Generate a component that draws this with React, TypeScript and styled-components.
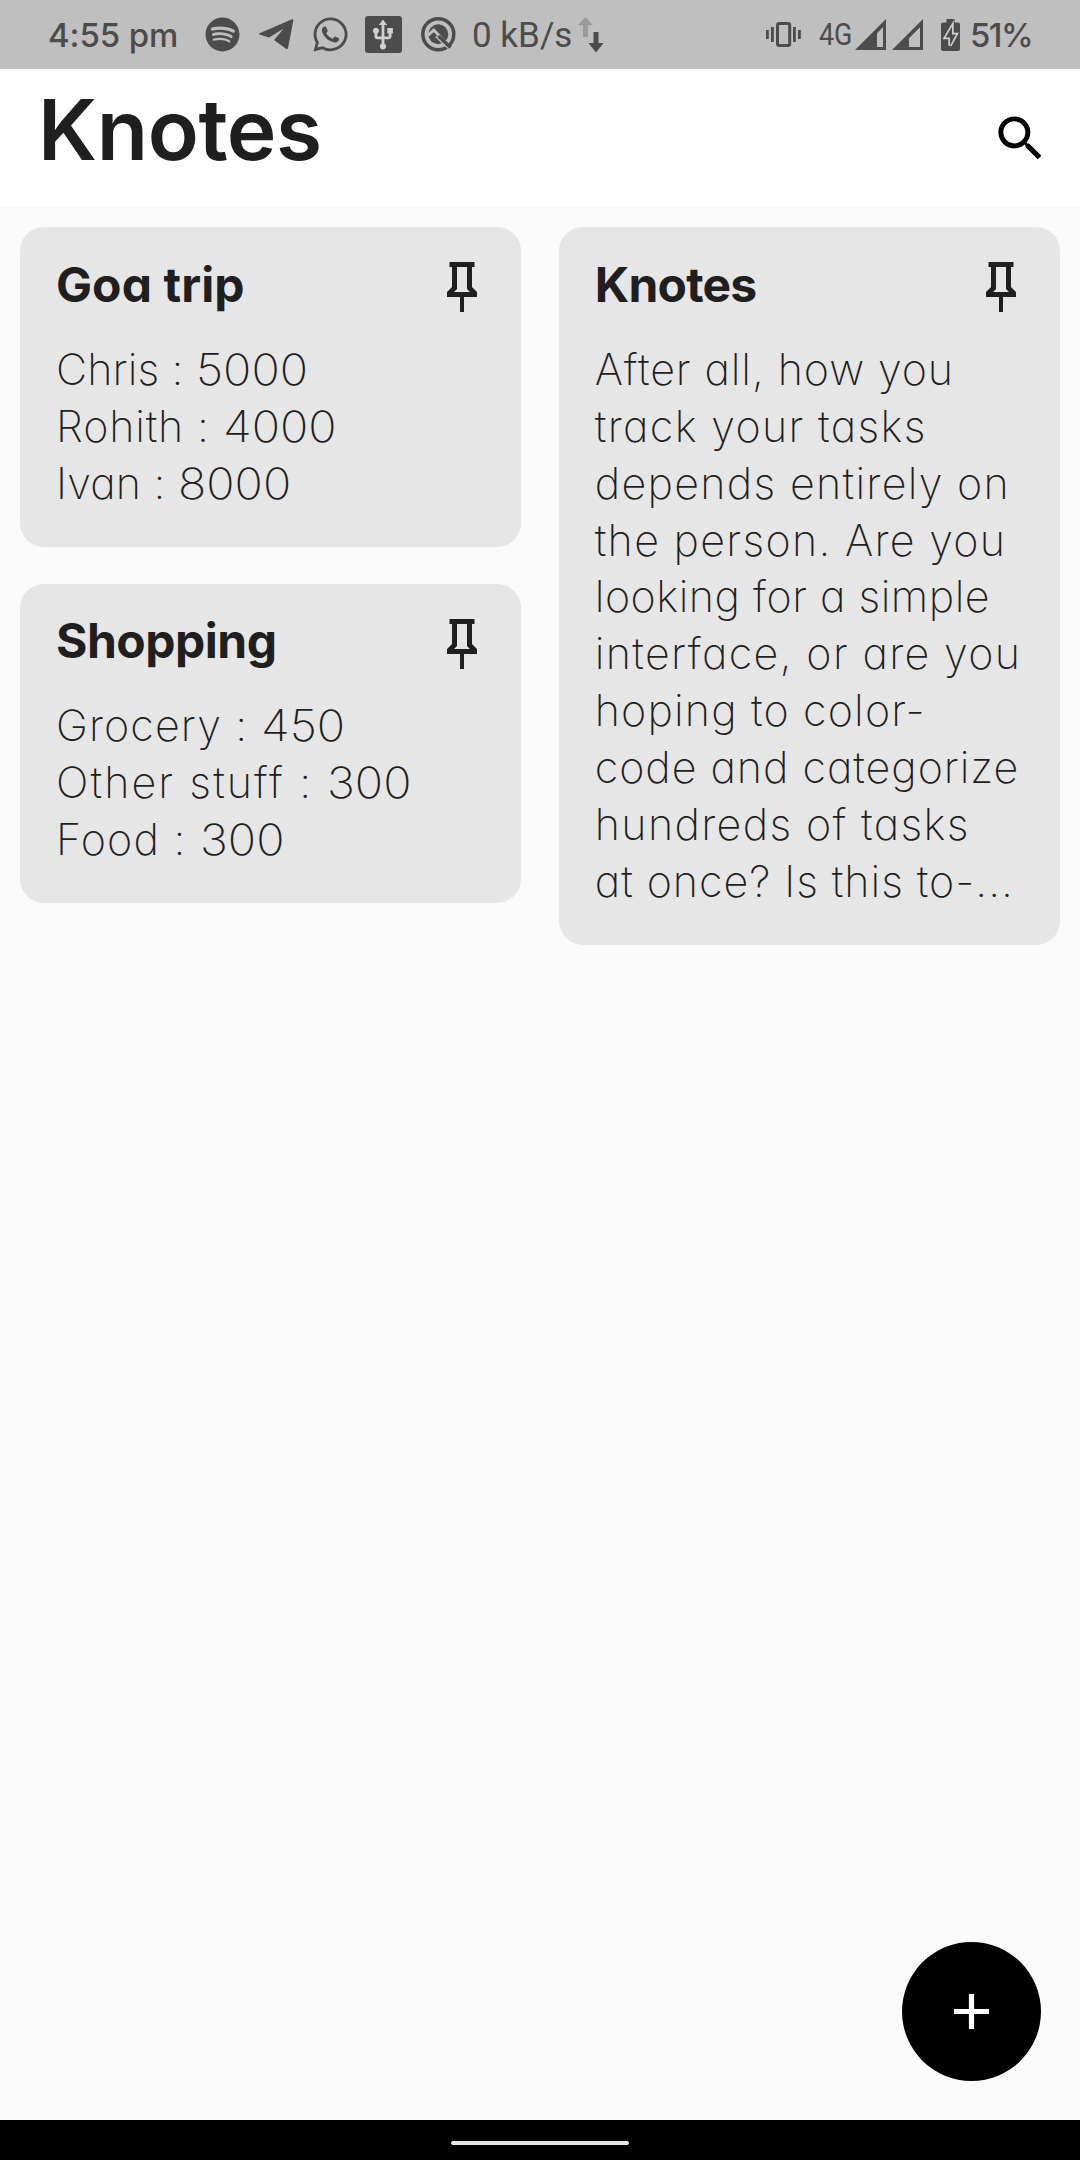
import React from 'react';
import styled, { createGlobalStyle } from 'styled-components';
import { FaSpotify, FaWhatsapp } from 'react-icons/fa';
import { MdSearch, MdUsb } from 'react-icons/md';

const ink = '#4c4c4c';
const barGrey = '#bfbfbf';

const GlobalStyle = createGlobalStyle`
  *, *::before, *::after { box-sizing: border-box; }
  body { margin: 0; background: #fafafa; }
  h1, h2, p { margin: 0; }
  svg { display: block; flex: none; }
`;

const Screen = styled.div`
  display: flex;
  flex-direction: column;
  width: 1080px;
  height: 2160px;
  overflow: hidden;
  background: #fafafa;
  color: #1f1f1f;
  font-family: Inter, 'Liberation Sans', sans-serif;
  font-feature-settings: 'cv11', 'calt' 0;
`;

const StatusBar = styled.div`
  display: flex;
  flex: none;
  justify-content: space-between;
  height: 69px;
  padding: 0 48px;
  background: ${barGrey};
  color: ${ink};
`;

const StatusGroup = styled.div`
  display: flex;
  align-items: center;
`;

const Slot = styled.span<{ $gap: number }>`
  display: flex;
  flex: none;
  margin-left: ${(p) => p.$gap}px;
`;

const StatusText = styled.span<{ $gap?: number; $width: number; $spacing?: number }>`
  width: ${(p) => p.$width}px;
  margin-left: ${(p) => p.$gap ?? 0}px;
  font-size: 33px;
  font-weight: 500;
  line-height: 40px;
  letter-spacing: ${(p) => p.$spacing ?? 0}px;
  white-space: nowrap;
`;

const SpeedText = styled(StatusText)`
  padding-top: 2px;
  font-family: Roboto, sans-serif;
  font-size: 35px;
  font-weight: 400;
`;

const NetworkText = styled(StatusText)`
  font-family: Roboto, sans-serif;
  font-size: 30.5px;
  font-weight: 400;
  transform: scaleX(0.88);
  transform-origin: left;
`;

const UsbBadge = styled(Slot)`
  align-items: center;
  justify-content: center;
  width: 37px;
  height: 37px;
  border-radius: 3px;
  background: ${ink};
  color: #d0d0d0;
`;

const Header = styled.header`
  display: flex;
  flex: none;
  align-items: flex-start;
  justify-content: space-between;
  height: 138px;
  padding: 11px 30px 0 38px;
  background: #fff;
`;

const AppTitle = styled.h1`
  font-size: 84px;
  font-weight: 600;
  line-height: 100px;
  letter-spacing: -0.4px;
`;

const SearchButton = styled.button`
  margin: 29px 0 0;
  padding: 0;
  border: 0;
  background: none;
  color: #000;
`;

const Board = styled.main`
  display: grid;
  grid-template-columns: 1fr 1fr;
  flex: 1;
  align-items: start;
  gap: 37.5px;
  padding: 20.3px 20px 0;
`;

const Column = styled.div`
  display: flex;
  flex-direction: column;
  gap: 37px;
`;

const Card = styled.article`
  padding: 28.7px 29px 35.2px 36px;
  border-radius: 24px;
  background: #e6e6e6;
`;

const CardHead = styled.div`
  display: flex;
  justify-content: space-between;
  height: 85px;
`;

const CardTitle = styled.h2<{ $spacing: number }>`
  font-size: 48px;
  font-weight: 700;
  line-height: 58px;
  letter-spacing: ${(p) => p.$spacing}px;
`;

const Line = styled.p<{ $spacing: number }>`
  font-size: 43px;
  font-weight: 200;
  line-height: 56.88px;
  letter-spacing: ${(p) => p.$spacing}px;
  white-space: nowrap;
`;

const Amount = styled.span`
  display: inline-block;
  letter-spacing: 0;
  transform: scaleX(1.09);
  transform-origin: left;
`;

const Footer = styled.div`
  display: flex;
  flex: none;
  justify-content: flex-end;
  padding: 0 39.5px 39.5px;
`;

const Fab = styled.button`
  display: flex;
  align-items: center;
  justify-content: center;
  width: 139px;
  height: 139px;
  padding: 0;
  border: 0;
  border-radius: 50%;
  background: #000;
`;

const NavBar = styled.div`
  display: flex;
  flex: none;
  justify-content: center;
  height: 40px;
  padding-top: 21px;
  background: #000;
`;

const Handle = styled.span`
  width: 178px;
  height: 4px;
  border-radius: 2px;
  background: #e6e6e6;
`;

const Pin = styled.svg`
  margin-top: 1.5px;
  fill: currentColor;
`;

const PinIcon = () => (
  <Pin width="60" height="60" viewBox="0 0 24 24">
    <path d="M16 12V4h1V2H7v2h1v8l-2 2v2h5.200v6h1.600v-6H18v-2l-2-2M8.800 14l1.200-1.200V4h4v8.800l1.200 1.200H8.800z" />
  </Pin>
);

const PlaneIcon = () => (
  <svg width="35" height="31" viewBox="0 0 35 31">
    <path
      d="M.5 14.200 33 .2q1.600-.4 1.300 1.500L29 29q-.6 1.600-2 .7L15 21l9.500-11.200L10 18.500 1 15.800q-1.500-.7-.5-1.600z"
      fill={ink}
    />
  </svg>
);

const QIcon = () => (
  <svg width="35" height="35" viewBox="0 0 35 35" fill="none">
    <circle cx="17.300" cy="17.300" r="15.500" stroke={ink} strokeWidth="3.500" />
    <circle cx="17.300" cy="17.300" r="10" fill={ink} />
    <path d="M7 18.500 12.800 13 28 29" stroke={barGrey} strokeWidth="3" />
    <path d="M15 19.500 30.500 34" stroke={barGrey} strokeWidth="2" />
    <path d="M17.500 19 29.500 30.500" stroke={ink} strokeWidth="3.500" />
  </svg>
);

const TransferIcon = () => (
  <svg width="26" height="36" viewBox="0 0 26 36">
    <path d="M7.500 0 15 8h-5v12H5V8H0z" fill="#999" />
    <path d="M15.500 15h5v11H25.500L18 35.500 10.500 26h5z" fill={ink} />
  </svg>
);

const VibrateIcon = () => (
  <svg width="35" height="25" viewBox="0 0 35 25" fill={ink}>
    <path d="M0 8h2.800v9H0zM5 5h2.800v15H5zM27 5h2.800v15H27zM32 8h2.800v9H32z" />
    <rect x="11.500" y="1.500" width="12.200" height="22" rx="1.500" fill="none" stroke={ink} strokeWidth="3" />
  </svg>
);

const SignalIcon = ({ cut }: { cut: number }) => (
  <svg width="31" height="31" viewBox="0 0 31 31">
    <path fillRule="evenodd" fill={ink} d={`M0 31 31 0v31zM${cut} ${36.3 - cut}V28H28V8.300z`} />
  </svg>
);

const bolt = 'M11 7.500 4.500 18.500h4.500v8L15 15.500h-4z';

const BatteryIcon = () => (
  <svg width="19" height="32" viewBox="0 0 19 32">
    <path d="M5.500 0h8v3.500H17a2 2 0 0 1 2 2V30a2 2 0 0 1-2 2H2a2 2 0 0 1-2-2V5.500a2 2 0 0 1 2-2h3.500z" fill={ink} />
    <path d={bolt} fill={ink} stroke="#cfcfcf" strokeWidth="3.400" />
    <path d={bolt} fill={ink} />
  </svg>
);

const PlusIcon = () => (
  <svg width="35" height="35" viewBox="0 0 35 35">
    <path d="M14.900 0h5.200v14.900H35v5.200H20.100V35h-5.200V20.100H0v-5.200h14.900z" fill="#fff" />
  </svg>
);

type NoteLine = { text: string; spacing: number; amount?: string };
type Note = { title: string; titleSpacing: number; lines: NoteLine[] };

const leftNotes: Note[] = [
  {
    title: 'Goa trip',
    titleSpacing: 0.1,
    lines: [
      { text: 'Chris :', amount: '5000', spacing: 0.1 },
      { text: 'Rohith :', amount: '4000', spacing: 0.8 },
      { text: 'Ivan :', amount: '8000', spacing: 0.2 },
    ],
  },
  {
    title: 'Shopping',
    titleSpacing: -0.5,
    lines: [
      { text: 'Grocery :', amount: '450', spacing: 1.1 },
      { text: 'Other stuff :', amount: '300', spacing: 2.1 },
      { text: 'Food :', amount: '300', spacing: 1.2 },
    ],
  },
];

const rightNotes: Note[] = [
  {
    title: 'Knotes',
    titleSpacing: -0.8,
    lines: [
      { text: 'After all, how you', spacing: 0.9 },
      { text: 'track your tasks', spacing: 1.35 },
      { text: 'depends entirely on', spacing: 1.3 },
      { text: 'the person. Are you', spacing: 1.3 },
      { text: 'looking for a simple', spacing: 0.5 },
      { text: 'interface, or are you', spacing: 1.34 },
      { text: 'hoping to color-', spacing: 1.15 },
      { text: 'code and categorize', spacing: 0.95 },
      { text: 'hundreds of tasks', spacing: 1.35 },
      { text: 'at once? Is this to-...', spacing: 0.95 },
    ],
  },
];

const NoteCard = ({ note }: { note: Note }) => (
  <Card>
    <CardHead>
      <CardTitle $spacing={note.titleSpacing}>{note.title}</CardTitle>
      <PinIcon />
    </CardHead>
    {note.lines.map(({ text, amount, spacing }) => (
      <Line key={text} $spacing={spacing}>
        {text}
        {amount && <> <Amount>{amount}</Amount></>}
      </Line>
    ))}
  </Card>
);

export default function App() {
  return (
    <Screen>
      <GlobalStyle />
      <StatusBar>
        <StatusGroup>
          <StatusText $width={130} $spacing={-0.1}>4:55 pm</StatusText>
          <Slot $gap={26.5}><FaSpotify size={35} /></Slot>
          <Slot $gap={19}><PlaneIcon /></Slot>
          <Slot $gap={17}><FaWhatsapp size={39} /></Slot>
          <UsbBadge $gap={15}><MdUsb size={34} /></UsbBadge>
          <Slot $gap={19}><QIcon /></Slot>
          <SpeedText $gap={16.5} $width={102}>0 kB/s</SpeedText>
          <Slot $gap={3.5}><TransferIcon /></Slot>
        </StatusGroup>
        <StatusGroup>
          <Slot $gap={0}><VibrateIcon /></Slot>
          <NetworkText $gap={17.5} $width={36.5}>4G</NetworkText>
          <Slot $gap={0}><SignalIcon cut={22} /></Slot>
          <Slot $gap={6}><SignalIcon cut={17} /></Slot>
          <Slot $gap={18}><BatteryIcon /></Slot>
          <StatusText $gap={10} $width={62} $spacing={-1.6}>51%</StatusText>
        </StatusGroup>
      </StatusBar>
      <Header>
        <AppTitle>Knotes</AppTitle>
        <SearchButton aria-label="Search"><MdSearch size={59} /></SearchButton>
      </Header>
      <Board>
        <Column>
          {leftNotes.map((n) => <NoteCard key={n.title} note={n} />)}
        </Column>
        <Column>
          {rightNotes.map((n) => <NoteCard key={n.title} note={n} />)}
        </Column>
      </Board>
      <Footer>
        <Fab aria-label="Add note"><PlusIcon /></Fab>
      </Footer>
      <NavBar><Handle /></NavBar>
    </Screen>
  );
}
